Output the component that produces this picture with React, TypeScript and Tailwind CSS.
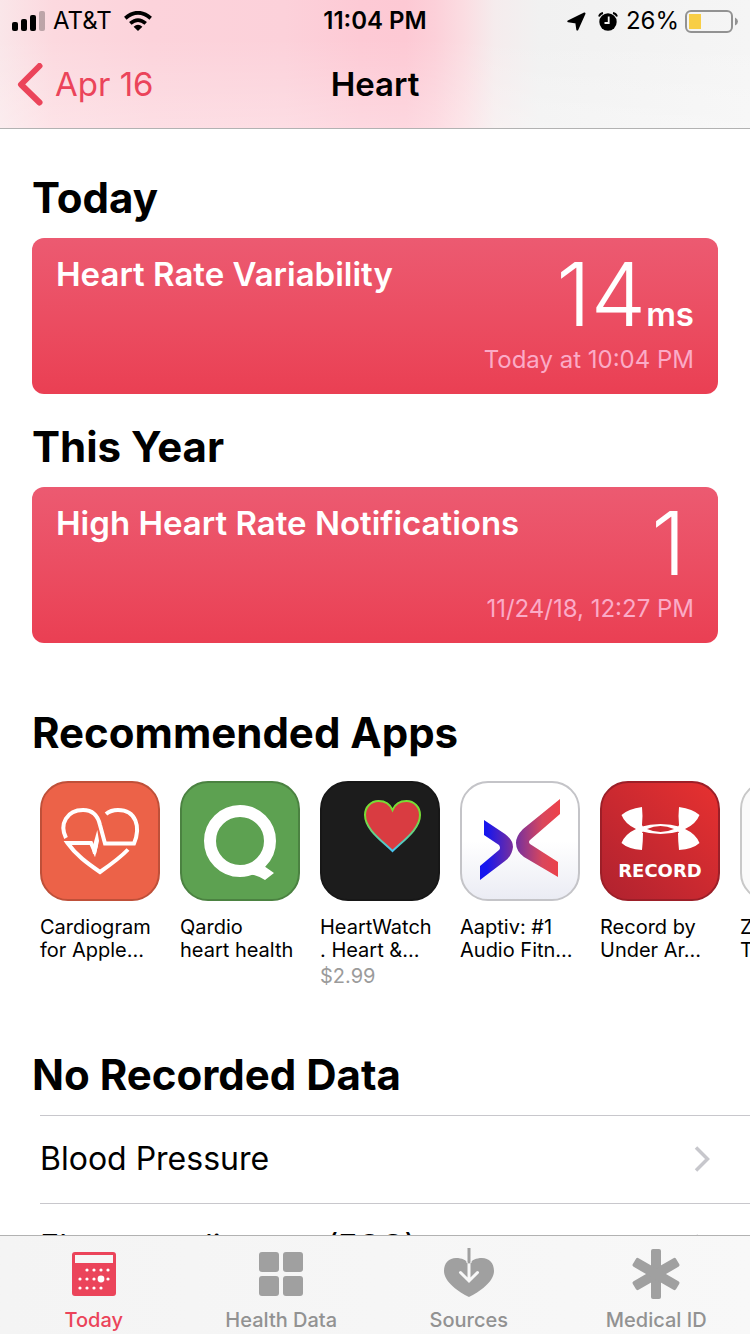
import type { ReactNode } from 'react';

interface MetricCardProps {
  readonly title: string;
  readonly value: string;
  readonly unit?: string;
  readonly time: string;
}

interface AppTileProps {
  readonly lines: readonly [string, string];
  readonly price?: string;
  readonly tile: string;
  readonly children?: ReactNode;
}

interface TabProps {
  readonly label: string;
  readonly active?: boolean;
  readonly children: ReactNode;
}

function StatusBar() {
  return (
    <div className="grid h-10 grid-cols-[1fr_auto_1fr] items-center px-3 pt-0.5 text-2xl">
      <div className="flex items-center">
        <svg className="mr-2 h-5 w-[33px]" viewBox="0 0 33 20">
          <rect x="0" y="11" width="6" height="9" rx="2" />
          <rect x="9" y="8" width="6" height="12" rx="2" />
          <rect x="18" y="4" width="6" height="16" rx="2" />
          <rect x="27" y="0" width="6" height="20" rx="2" fillOpacity="0.25" />
        </svg>
        <span>AT&amp;T</span>
        <svg className="ml-3 h-5 w-7" viewBox="0 0 28 20">
          <path d="M14 20L9.6 15.8Q14 11.800 18.400 15.800Z" />
          <path d="M6.300 12.400Q14 5.800 21.700 12.400" fill="none" stroke="currentColor" strokeWidth="3.800" />
          <path d="M1.300 7.200Q14 -3.600 26.700 7.200" fill="none" stroke="currentColor" strokeWidth="3.800" />
        </svg>
      </div>
      <span className="font-semibold">11:04 PM</span>
      <div className="flex items-center justify-end">
        <svg className="mr-3 h-[19px] w-[19px]" viewBox="0 0 19 19">
          <path
            d="M17.500 1.500L10.300 17.500L9.300 10.500L1.300 9.300Z"
            stroke="currentColor"
            strokeWidth="2"
            strokeLinejoin="round"
          />
        </svg>
        <svg className="mr-2 h-[19px] w-5" viewBox="0 0 20 19">
          <circle cx="10" cy="10" r="8.700" />
          <path d="M1 4.500Q2 1.500 5 1M19 4.500Q18 1.500 15 1" fill="none" stroke="currentColor" strokeWidth="1.800" />
          <path d="M10.700 4.500V11H6.500" fill="none" stroke="#f3f3f3" strokeWidth="1.800" />
        </svg>
        <span className="mr-1.5">26%</span>
        <svg className="h-[23px] w-[53px]" viewBox="0 0 53 23">
          <rect x="1" y="1" width="46" height="21" rx="5" fill="none" stroke="#929292" strokeWidth="2" />
          <rect x="4" y="4" width="12" height="15" fill="#f8ce46" />
          <path d="M50 7.500Q53 9 53 11.500T50 15.500Z" fill="#929292" />
        </svg>
      </div>
    </div>
  );
}

function SectionTitle({ children }: { readonly children: ReactNode }) {
  return <h2 className="px-8 text-[42px] leading-12 font-bold">{children}</h2>;
}

function MetricCard({ title, value, unit, time }: MetricCardProps) {
  return (
    <article className="mx-8 mt-4 rounded-xl bg-linear-to-b from-[#ec5a71] to-[#ea3f53] px-6 pt-4 pb-[18px] text-white">
      <div className="flex items-start justify-between">
        <h3 className="text-[33px] leading-10 font-semibold">{title}</h3>
        <p className={`flex h-20 items-baseline leading-20 ${unit ? '' : 'pr-2'}`}>
          <span className="text-[88px] font-light">{value}</span>
          {unit && <span className="text-[33px] font-semibold">{unit}</span>}
        </p>
      </div>
      <p className="mt-[10px] text-right text-2xl leading-8 text-[#fbabc7]">{time}</p>
    </article>
  );
}

function AppTile({ lines, price, tile, children }: AppTileProps) {
  return (
    <li className="w-[120px] shrink-0">
      <a href="#" className="block">
        <div className={`h-[120px] overflow-hidden rounded-[28px] ${tile}`}>
          {children}
        </div>
        <p className="mt-[15px] text-xl leading-[23px] whitespace-nowrap">
          {lines[0]}
          <br />
          {lines[1]}
        </p>
        {price && <p className="text-xl leading-7 text-[#9b9b9b]">{price}</p>}
      </a>
    </li>
  );
}

// Tiles carry a 2px border, so each glyph shows the inner 116 units of a 120 grid
function TileGlyph({ children }: { readonly children: ReactNode }) {
  return (
    <svg className="h-full w-full" viewBox="2 2 116 116">
      {children}
    </svg>
  );
}

function CardiogramIcon() {
  return (
    <TileGlyph>
      <g fill="none" stroke="#fff" strokeWidth="4">
        <path d="M26 57C19 43 27 29 43 29C53 29 58 35 60 44L65 62.500H94C101 46 96 29 78 29C73 29 69 30.500 66 33" />
        <path d="M88 68.500C80 77 70 84 60 91C47 82 36 74 27.500 62H51L54.500 70L56 64" />
      </g>
      <path d="M52 68L57.300 49L59 60L56 73H53Z" fill="#fff" />
    </TileGlyph>
  );
}

function QardioIcon() {
  return (
    <TileGlyph>
      <circle cx="60" cy="60" r="30" fill="none" stroke="#fff" strokeWidth="12" />
      <path d="M66 93Q76 93 85 99L94 92L84 85L75 84Z" fill="#fff" />
    </TileGlyph>
  );
}

function HeartWatchIcon() {
  return (
    <TileGlyph>
      <defs>
        <linearGradient id="heart-rim" x1="0" y1="0" x2="0" y2="1">
          <stop offset="0.350" stopColor="#78dc35" />
          <stop offset="1" stopColor="#48c4f0" />
        </linearGradient>
      </defs>
      <path
        d="M72.500 70C61 59 45 48 45 34C45 26 51 20 58.500 20C65 20 70 23 72.500 29C75 23 80 20 86.500 20C94 20 100 26 100 34C100 48 84 59 72.500 70Z"
        fill="#d93c41"
        stroke="url(#heart-rim)"
        strokeWidth="2"
      />
    </TileGlyph>
  );
}

function AaptivIcon() {
  return (
    <TileGlyph>
      <defs>
        <linearGradient id="aaptiv-left">
          <stop offset="0.200" stopColor="#1616ee" />
          <stop offset="1" stopColor="#7a2f9c" />
        </linearGradient>
        <linearGradient id="aaptiv-right">
          <stop offset="0" stopColor="#75309f" />
          <stop offset="0.600" stopColor="#d9475c" />
          <stop offset="1" stopColor="#ee4148" />
        </linearGradient>
      </defs>
      <path d="M24 39L45 53Q53 59 53 66Q52 75 45 80L20 99V85L39 69Q41 67 39 64L24 54Z" fill="url(#aaptiv-left)" />
      <path d="M100 18V33L70 59Q68 61 70 63L98 81V96L64 76Q56 70 56 62Q56 55 63 48Z" fill="url(#aaptiv-right)" />
    </TileGlyph>
  );
}

function RecordIcon() {
  return (
    <TileGlyph>
      <g fill="#fff">
        <path d="M42 26Q28 28 21.500 34Q25 43 36 48Q25 53 21.500 62Q28 68 42 69Q43 60 43 52H42L44 48L42 44Q43 35 42 26Z" />
        <path d="M79 26Q93 28 99.500 34Q96 43 85 48Q96 53 99.500 62Q93 68 79 69Q78 60 78 52H79L77 48L79 44Q78 35 79 26Z" />
        <path
          fillRule="evenodd"
          d="M40 46Q60.500 40 81 46V50Q60.500 56 40 50ZM47 48Q60.500 54 74 48Q60.500 42 47 48Z"
        />
        <text x="60" y="96" textAnchor="middle" className="font-['DejaVu_Sans'] text-[18px] font-bold">
          RECORD
        </text>
      </g>
    </TileGlyph>
  );
}

function ListRow({ label }: { readonly label: string }) {
  return (
    <li className="ml-10 border-t border-[#c8c7cc]">
      <a href="#" className="flex h-[87px] items-center justify-between pr-10 pb-0.5 text-[32px]">
        {label}
        <svg className="h-[26px] w-4" viewBox="0 0 16 26" fill="none" stroke="#c7c7cc" strokeWidth="3.500">
          <path d="M2 1.500L13.500 13L2 24.500" />
        </svg>
      </a>
    </li>
  );
}

function Tab({ label, active = false, children }: TabProps) {
  return (
    <a
      href="#"
      aria-current={active ? 'page' : undefined}
      className={`flex flex-1 flex-col items-center ${active ? 'text-[#eb445a]' : 'text-[#929292]'}`}
    >
      <svg className="h-[52px] w-[52px]" viewBox="0 0 52 52">
        {children}
      </svg>
      <span className="mt-2 text-xl leading-6 font-medium">{label}</span>
    </a>
  );
}

// Day dots on the calendar glyph, row by row
const CALENDAR_DOTS = [
  [19, 22], [26, 22], [33, 22], [40, 22],
  [12, 31], [19, 31], [26, 31], [40, 31],
  [12, 40], [19, 40], [26, 40], [33, 40],
];

function TabBar() {
  return (
    <nav className="flex shrink-0 border-t border-[#b2b2b2] bg-linear-to-r from-[#f4f4f4] to-[#f8f8f8] pt-3 pb-[2px]">
      <Tab label="Today" active>
        <rect x="4" y="4" width="44" height="44" rx="3" fill="#eb445a" />
        <rect x="7" y="7" width="38" height="8" fill="#f6f6f6" />
        {CALENDAR_DOTS.map(([x, y]) => (
          <circle key={`${x}-${y}`} cx={x} cy={y} r="1.600" fill="#fff" />
        ))}
        <circle cx="33" cy="31" r="3.400" fill="#fff" />
      </Tab>
      <Tab label="Health Data">
        <g fill="#a0a0a0">
          <rect x="4" y="4" width="20" height="20" rx="3" />
          <rect x="28" y="4" width="20" height="20" rx="3" />
          <rect x="4" y="28" width="20" height="20" rx="3" />
          <rect x="28" y="28" width="20" height="20" rx="3" />
        </g>
      </Tab>
      <Tab label="Sources">
        <path
          d="M26 49C16 44 1 34 1 23C1 15 6 10 13 10C19 10 23 12 26 16C29 12 33 10 39 10C46 10 51 15 51 23C51 34 36 44 26 49Z"
          fill="#a0a0a0"
        />
        <path d="M26 15V32M17.500 24.500L26 33L34.500 24.500" fill="none" stroke="#f8f8f8" strokeWidth="3" strokeLinecap="round" />
        <path d="M26 8V15" stroke="#f8f8f8" strokeWidth="5" />
        <path d="M26 0.500V14" stroke="#a0a0a0" strokeWidth="3" strokeLinecap="round" />
      </Tab>
      <Tab label="Medical ID">
        <g fill="#a0a0a0">
          <rect x="21" y="1" width="10" height="50" rx="2" />
          <rect x="21" y="1" width="10" height="50" rx="2" transform="rotate(60 26 26)" />
          <rect x="21" y="1" width="10" height="50" rx="2" transform="rotate(120 26 26)" />
        </g>
      </Tab>
    </nav>
  );
}

export default function App() {
  return (
    <div className="flex h-screen flex-col overflow-hidden bg-white font-[Inter,'Liberation_Sans',sans-serif] text-black">
      <header className="shrink-0 border-b border-[#b2b2b2] bg-[linear-gradient(to_top,#ffffff44,#ffffff00_70%),linear-gradient(to_right,#fae6e9,#fcd9df_7%,#fcd3db_20%,#fcd1da_38%,#fdcad5_48%,#fdc9d4_54%,#fcd0d9_58%,#fbdde2_62%,#f5eced_66%,#f1f1f1_72%,#f5f5f5)]">
        <StatusBar />
        <div className="grid h-[88px] grid-cols-[1fr_auto_1fr] items-center px-4 pt-0.5">
          <button type="button" className="flex items-center gap-3 text-[33px] text-[#eb445a]">
            <svg className="h-11 w-[27px]" viewBox="0 0 27 44" fill="none" stroke="currentColor" strokeWidth="6">
              <path d="M23.500 3L5 21.500L23.500 39.500" strokeLinecap="round" strokeLinejoin="round" />
            </svg>
            Apr 16
          </button>
          <h1 className="text-[33px] font-semibold">Heart</h1>
        </div>
      </header>

      <main className="min-h-0 flex-1 overflow-hidden">
        <section className="pt-[45px]">
          <SectionTitle>Today</SectionTitle>
          <MetricCard title="Heart Rate Variability" value="14" unit="ms" time="Today at 10:04 PM" />
        </section>

        <section className="pt-[29px]">
          <SectionTitle>This Year</SectionTitle>
          <MetricCard title="High Heart Rate Notifications" value="1" time="11/24/18, 12:27 PM" />
        </section>

        <section className="pt-[66px]">
          <SectionTitle>Recommended Apps</SectionTitle>
          <ul className="mt-6 flex gap-5 overflow-hidden pl-10">
            <AppTile lines={['Cardiogram', 'for Apple...']} tile="border-2 border-[#bf5039] bg-[#ec6248]">
              <CardiogramIcon />
            </AppTile>
            <AppTile lines={['Qardio', 'heart health']} tile="border-2 border-[#4b8241] bg-[#5da151]">
              <QardioIcon />
            </AppTile>
            <AppTile lines={['HeartWatch', '. Heart &...']} price="$2.99" tile="border-2 border-[#171717] bg-[#1c1c1c]">
              <HeartWatchIcon />
            </AppTile>
            <AppTile
              lines={['Aaptiv: #1', 'Audio Fitn...']}
              tile="border-2 border-[#c4c4c8] bg-linear-to-b from-white from-50% to-[#ebecf4]"
            >
              <AaptivIcon />
            </AppTile>
            <AppTile
              lines={['Record by', 'Under Ar...']}
              tile="border-2 border-[#9c1f28] bg-linear-to-tr from-[#b0222f] to-[#e73130]"
            >
              <RecordIcon />
            </AppTile>
            <AppTile lines={['Zova', 'Training']} tile="border-2 border-[#c8c8c8] bg-[#fafafa]" />
          </ul>
        </section>

        <section className="pt-[61px]">
          <SectionTitle>No Recorded Data</SectionTitle>
          <ul className="mt-4">
            <ListRow label="Blood Pressure" />
            <ListRow label="Electrocardiogram (ECG)" />
          </ul>
        </section>
      </main>

      <TabBar />
    </div>
  );
}
